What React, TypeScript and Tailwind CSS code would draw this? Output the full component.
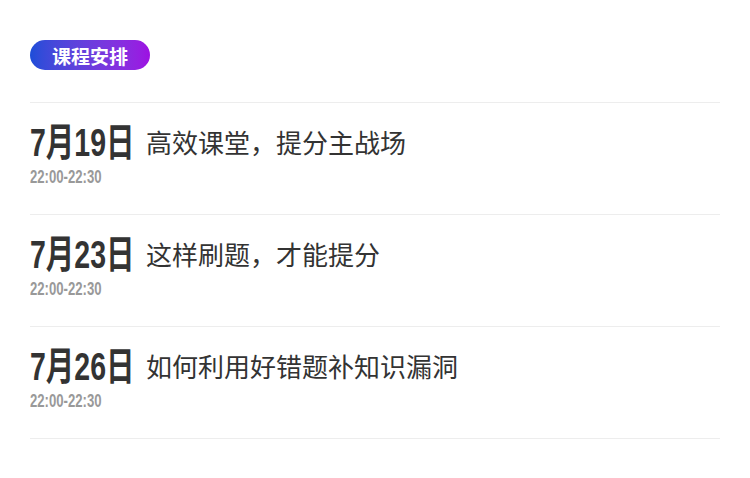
import React from "react";

const rows = [
  { date: "7月19日", title: "高效课堂，提分主战场" },
  { date: "7月23日", title: "这样刷题，才能提分" },
  { date: "7月26日", title: "如何利用好错题补知识漏洞" },
];

const cond = {
  fontFamily: '"Liberation Sans", "Noto Sans CJK SC", sans-serif',
};

export default function App() {
  return (
    <div className="w-[750px] h-[478px] bg-white px-[30px] pt-[40px]" style={{ fontFamily: '"Noto Sans CJK SC", sans-serif' }}>
      <div className="inline-flex items-center justify-center h-[30px] w-[120px] rounded-full bg-gradient-to-r from-[#1b4dd8] to-[#9d0fe2] text-white text-[19px] font-bold leading-none">
        课程安排
      </div>
      <div className="mt-[32px]">
        {rows.map((r) => (
          <div key={r.date} className="border-t border-[#ededed] h-[112px] pt-[20px]">
            <div className="flex items-center">
              <div className="w-[116px] h-[39px] shrink-0">
                <span
                  className="inline-block origin-left scale-x-[0.73] text-[39px] font-bold leading-[39px] text-[#333] whitespace-nowrap"
                  style={cond}
                >
                  {r.date}
                </span>
              </div>
              <div className="text-[26px] leading-none text-[#333] whitespace-nowrap -mt-[2px]">{r.title}</div>
            </div>
            <div className="mt-[2px] h-[18px]">
              <span
                className="inline-block origin-left scale-x-[0.73] text-[18px] font-bold leading-[18px] text-[#999] whitespace-nowrap"
                style={cond}
              >
                22:00-22:30
              </span>
            </div>
          </div>
        ))}
        <div className="border-t border-[#ededed]" />
      </div>
    </div>
  );
}
